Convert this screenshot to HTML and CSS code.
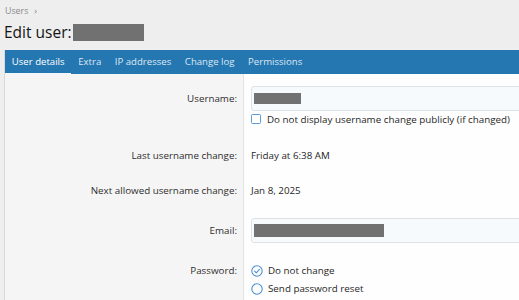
FILE: index.html
```html
<!DOCTYPE html>
<html>
<head>
<meta charset="utf-8">
<link rel="stylesheet" href="styles.css">
</head>
<body>
<div class="crumbs"><span>Users</span><span class="sep">›</span></div>
<h1 class="title">Edit user: <span class="redact redact-title"></span></h1>
<div class="block">
  <nav class="tabs">
    <span class="tab active">User details</span>
    <span class="tab">Extra</span>
    <span class="tab">IP addresses</span>
    <span class="tab">Change log</span>
    <span class="tab">Permissions</span>
  </nav>
  <div class="form">
    <div class="row row-first">
      <div class="label label-input">Username:</div>
      <div class="control">
        <div class="input"><span class="redact redact-user"></span></div>
        <label class="check"><span class="box"></span>Do not display username change publicly (if changed)</label>
      </div>
    </div>
    <div class="row">
      <div class="label">Last username change:</div>
      <div class="control text">Friday at 6:38 AM</div>
    </div>
    <div class="row">
      <div class="label">Next allowed username change:</div>
      <div class="control text">Jan 8, 2025</div>
    </div>
    <div class="row">
      <div class="label label-input">Email:</div>
      <div class="control">
        <div class="input"><span class="redact redact-email"></span></div>
      </div>
    </div>
    <div class="row row-pw">
      <div class="label label-opt">Password:</div>
      <div class="control">
        <div class="opt">
          <svg class="radio" viewBox="0 0 12 12" width="12" height="12"><circle cx="6" cy="6" r="5.2" fill="none" stroke="#4f92cf" stroke-width="1.1"/><path d="M3.6 6.2 L5.3 7.8 L8.4 4.4" fill="none" stroke="#4f92cf" stroke-width="1.1" stroke-linecap="round" stroke-linejoin="round"/></svg>
          <span>Do not change</span>
        </div>
        <div class="opt">
          <svg class="radio" viewBox="0 0 12 12" width="12" height="12"><circle cx="6" cy="6" r="5.2" fill="none" stroke="#4f92cf" stroke-width="1.1"/></svg>
          <span>Send password reset</span>
        </div>
        <div class="hint">A password reset confirmation will be emailed to the user.</div>
      </div>
    </div>
  </div>
</div>
</body>
</html>
```
FILE: styles.css
```css
html, body {
  margin: 0;
  padding: 0;
}
body {
  background: #eeeeee;
  font-family: "Open Sans", "Noto Sans", sans-serif;
  color: #222;
  overflow: hidden;
  width: 519px;
  height: 300px;
}
.crumbs {
  padding: 5px 0 0 5px;
  height: 11px;
  line-height: 11px;
  font-size: 8.8px;
  color: #8a8a8a;
}
.crumbs .sep {
  margin-left: 6px;
  font-size: 9px;
}
.title {
  margin: 6px 0 8px 4px;
  font-size: 15.5px;
  font-weight: 400;
  line-height: 20px;
  height: 20px;
  color: #141414;
  white-space: nowrap;
}
.redact {
  display: inline-block;
  background: #717171;
}
.redact-title {
  width: 71px;
  height: 17px;
  vertical-align: -3px;
  margin-left: -3px;
}
.block {
  margin-left: 4px;
  border-left: 1px solid #d9d9d9;
}
.tabs {
  display: flex;
  height: 24px;
  background: #2577b1;
  font-size: 9.6px;
  line-height: 24px;
}
.tab {
  padding: 0 6.8px;
  color: #dce8f3;
  white-space: nowrap;
}
.tab.active {
  color: #ffffff;
  box-shadow: inset 0 -1px 0 #f2f6fa;
}
.row {
  display: grid;
  grid-template-columns: 239px 1fr;
  font-size: 9.8px;
}
.label {
  background: #f5f5f5;
  border-right: 1px solid #e3e3e3;
  text-align: right;
  padding: 10px 6px 10px 0;
  line-height: 15px;
  color: #2e2e2e;
  white-space: nowrap;
}
.control {
  background: #fefefe;
  padding: 10px 0 10px 7px;
  line-height: 15px;
  white-space: nowrap;
  overflow: hidden;
}
.text {
  color: #1e1e1e;
}
.row-first .label,
.row-first .control {
  padding-top: 12px;
  padding-bottom: 12px;
}
.label-input {
  line-height: 25px;
}
.input {
  box-sizing: border-box;
  height: 25px;
  width: 320px;
  background: #f7fafc;
  border: 1px solid #dde2e7;
  border-radius: 3px;
  padding: 0 0 0 2px;
  display: flex;
  align-items: center;
}
.redact-user {
  width: 47px;
  height: 11px;
}
.redact-email {
  width: 130px;
  height: 13px;
}
.check {
  display: flex;
  align-items: center;
  margin-top: 2px;
  height: 13px;
  line-height: 13px;
  color: #1e1e1e;
}
.box {
  box-sizing: border-box;
  width: 10px;
  height: 10px;
  border: 1.3px solid #5a9bd5;
  border-radius: 1.5px;
  margin-right: 6px;
  margin-top: -2px;
  background: #fff;
}
.row-pw .label,
.row-pw .control {
  padding-top: 8.5px;
  padding-bottom: 0;
}
.label-opt {
  line-height: 18px;
}
.opt {
  display: flex;
  align-items: center;
  height: 18px;
  line-height: 18px;
  color: #1e1e1e;
}
.radio {
  margin-right: 5px;
  flex: none;
}
.hint {
  margin-top: 0;
  padding-left: 16px;
  font-size: 8.6px;
  line-height: 12px;
  color: #8a8a8a;
}
```
